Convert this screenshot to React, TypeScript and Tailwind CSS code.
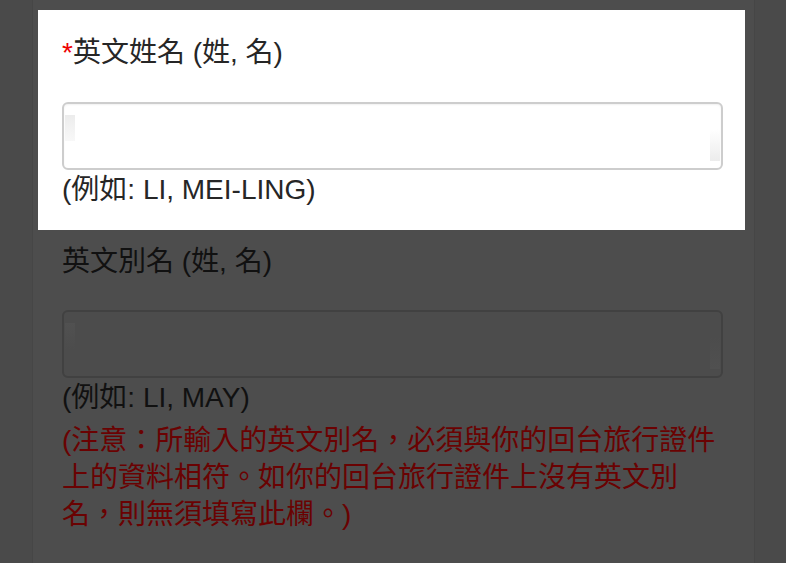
const FONT = "font-['Liberation_Sans','Noto_Sans_CJK_TC',sans-serif]";

function FakeInput({ dim }: { dim?: boolean }) {
  return (
    <div
      className={
        dim
          ? "h-[68px] rounded-[6px] border-2 border-[#414141] bg-[#4c4c4c] flex justify-between px-px"
          : "h-[68px] rounded-[6px] border-2 border-[#cdcdcd] bg-white shadow-[inset_0_1px_2px_rgba(0,0,0,0.06)] flex justify-between px-px"
      }
    >
      <div
        className={
          dim
            ? "mt-[11px] h-[26px] w-[10px] bg-gradient-to-b from-[#515151] to-[#4c4c4c]"
            : "mt-[11px] h-[26px] w-[10px] bg-gradient-to-b from-[#ececec] to-[#f8f8f8]"
        }
      />
      <div
        className={
          dim
            ? "mt-[25px] h-[32px] w-[10px] bg-gradient-to-b from-[#4c4c4c] to-[#505050]"
            : "mt-[25px] h-[32px] w-[10px] bg-gradient-to-b from-white to-[#ececec]"
        }
      />
    </div>
  );
}

export default function App() {
  return (
    <div className={`flex w-[786px] h-[563px] overflow-hidden bg-[#4a4a4a] text-[28px] ${FONT}`}>
      <div className="w-[32px] shrink-0" />
      <div className="w-[723px] shrink-0 flex flex-col bg-[#4d4d4d] border-x border-[#464646] pt-[10px]">
        {/* highlighted field */}
        <div className="ml-[5px] w-[707px] bg-white pl-[24px] pr-[22px] pt-[23px] pb-[20px] text-[#262626]">
          <div className="leading-[40px]">
            <span className="text-[#ee0000]">*</span>英文姓名 (姓, 名)
          </div>
          <div className="mt-[29px]">
            <FakeInput />
          </div>
          <div className="leading-[40px]">(例如: LI, MEI-LING)</div>
        </div>

        {/* dimmed field */}
        <div className="pl-[29px] w-[690px] text-[#111]">
          <div className="mt-[12px] leading-[40px]">英文別名 (姓, 名)</div>
          <div className="mt-[28px]">
            <FakeInput dim />
          </div>
          <div className="leading-[40px]">(例如: LI, MAY)</div>
          <div className="mt-[4px] w-[661px] leading-[37px] text-[#6a0202]">
            (注意：所輸入的英文別名，必須與你的回台旅行證件上的資料相符。如你的回台旅行證件上沒有英文別名，則無須填寫此欄。)
          </div>
        </div>
      </div>
    </div>
  );
}
